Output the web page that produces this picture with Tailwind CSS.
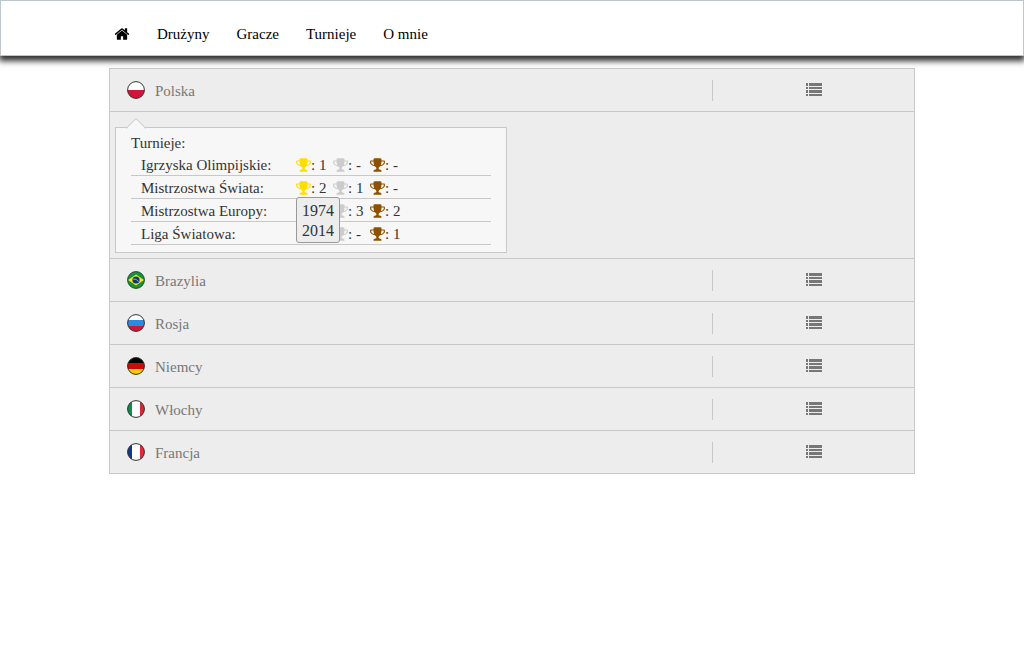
<!DOCTYPE html>
<html lang="pl">
<head>
<meta charset="utf-8">
<title>Drużyny</title>
<script src="https://cdn.jsdelivr.net/npm/@tailwindcss/browser@4"></script>
</head>
<body class="min-h-screen bg-white font-['Liberation_Serif',serif] text-[15px]">
<svg class="absolute size-0" aria-hidden="true">
  <symbol id="home" viewBox="0 0 1792 1792"><path d="M1472 992v480q0 26-19 45t-45 19h-384v-384h-256v384h-384q-26 0-45-19t-19-45v-480q0-1 .5-3t.5-3l575-474 575 474q1 2 1 6zm223-69l-62 74q-8 9-21 11h-3q-13 0-21-7l-692-577-692 577q-12 8-24 7-13-2-21-11l-62-74q-8-10-7-23.5t11-21.5l719-599q32-26 76-26t76 26l244 204v-195q0-14 9-23t23-9h192q14 0 23 9t9 23v408l219 182q10 8 11 21.5t-7 23.5z"/></symbol>
  <symbol id="cup" viewBox="64 0 1664 1792"><path d="M522 883q-74-162-74-371h-256v96q0 78 94.5 162t235.5 113zm1078-275v-96h-256q0 209-74 371 141-29 235.5-113t94.5-162zm128-128v128q0 71-41.5 143t-112 130-173 97.5-215.5 44.5q-42 54-95 95-38 34-52.5 72.5t-14.5 89.5q0 54 30.5 91t97.5 37q75 0 133.5 45.5t58.5 114.5v64q0 14-9 23t-23 9h-832q-14 0-23-9t-9-23v-64q0-69 58.5-114.5t133.5-45.5q67 0 97.5-37t30.5-91q0-51-14.5-89.5t-52.5-72.5q-53-41-95-95-113-5-215.5-44.5t-173-97.5-112-130-41.5-143v-128q0-40 28-68t68-28h288v-96q0-66 47-113t113-47h576q66 0 113 47t47 113v96h288q40 0 68 28t28 68z"/></symbol>
  <symbol id="list" viewBox="0 0 16 13"><path d="M0 0h2v3H0zM3 0h13v3H3zM0 4h2v2H0zM3 4h13v2H3zM0 7h2v3H0zM3 7h13v3H3zM0 11h2v2H0zM3 11h13v2H3z"/></symbol>
  <clipPath id="disc"><circle cx="9" cy="9" r="8.5"/></clipPath>
</svg>

<header class="border border-[#bfc6cb] bg-white shadow-[0_4px_6px_1px_#000000d0]">
  <nav class="mx-auto flex h-[54px] w-full max-w-[806px] items-end gap-[27px] pb-[11px] pl-[5px] leading-5 text-black">
    <a href="#" aria-label="Strona główna" class="mb-[2px]"><svg class="size-4 fill-black"><use href="#home"/></svg></a>
    <a href="#">Drużyny</a>
    <a href="#">Gracze</a>
    <a href="#">Turnieje</a>
    <a href="#">O mnie</a>
  </nav>
</header>

<main class="mx-auto mt-3 w-full max-w-[806px] divide-y divide-[#c8c8c8] border border-[#c8c8c8] bg-[#ededed] text-[#777777]">
  <section class="grid h-[43px] grid-cols-[3fr_1fr] items-center">
    <h2 class="flex h-[21px] items-center gap-[10px] border-r border-[#c8c8c8] pl-[17px]">
      <svg class="size-[18px]" viewBox="0 0 18 18"><g clip-path="url(#disc)"><path fill="#fff" d="M0 0h18v9H0z"/><path fill="#d3143a" d="M0 9h18v9H0z"/></g><circle cx="9" cy="9" r="8.4" fill="none" stroke="#333"/></svg>
      <span class="pt-[2px]">Polska</span></h2>
    <button aria-label="Szczegóły: Polska" class="mx-auto mb-[2px]"><svg class="h-[13px] w-4 fill-[#777777]"><use href="#list"/></svg></button>
  </section>

  <section class="pt-[15px] pr-[5px] pb-[5px] pl-[5px]">
    <div class="relative w-full max-w-[392px] border border-[#c8c8c8] bg-[#f7f7f7] px-[15px] pb-[7px] text-[#333333]">
      <svg class="absolute -top-[10px] left-[10px] h-[11px] w-5" viewBox="0 0 20 11"><path d="M0 11 10 1l10 10" fill="#f7f7f7"/><path d="M0 10.500 10 .7l10 9.800" fill="none" stroke="#c8c8c8"/></svg>
      <table class="w-full border-separate border-spacing-0 text-left leading-[19px] [&_td]:border-b [&_td]:border-[#c8c8c8] [&_th]:border-b [&_th]:border-[#c8c8c8]">
        <caption class="h-[25px] pt-[6px] text-left">Turnieje:</caption>
        <tbody>
          <tr class="h-[23px]">
            <th scope="row" class="w-[165px] p-0 pt-[3px] pl-[10px] font-normal">Igrzyska Olimpijskie:</th>
            <td class="w-[37px] p-0"><span class="flex items-center"><svg class="mt-[2px] h-4 w-[15px] shrink-0 fill-[#ffdd00]"><use href="#cup"/></svg><span class="whitespace-nowrap pt-[3px]">: 1</span></span></td>
            <td class="w-[37px] p-0"><span class="flex items-center"><svg class="mt-[2px] h-4 w-[15px] shrink-0 fill-[#cccccc]"><use href="#cup"/></svg><span class="whitespace-nowrap pt-[3px]">: -</span></span></td>
            <td class="p-0"><span class="flex items-center"><svg class="mt-[2px] h-4 w-[15px] shrink-0 fill-[#8c5200]"><use href="#cup"/></svg><span class="whitespace-nowrap pt-[3px]">: -</span></span></td>
          </tr>
          <tr class="h-[23px]">
            <th scope="row" class="p-0 pt-[3px] pl-[10px] font-normal">Mistrzostwa Świata:</th>
            <td class="relative p-0"><span class="flex items-center"><svg class="mt-[2px] h-4 w-[15px] shrink-0 fill-[#ffdd00]"><use href="#cup"/></svg><span class="whitespace-nowrap pt-[3px]">: 2</span></span>
              <div role="tooltip" class="absolute top-[21px] left-0 z-10 w-[44px] rounded-[3px] border border-[#999999] bg-[#ededed] pt-[3px] pb-[1px] text-center text-base leading-5">1974<br>2014</div></td>
            <td class="p-0"><span class="flex items-center"><svg class="mt-[2px] h-4 w-[15px] shrink-0 fill-[#cccccc]"><use href="#cup"/></svg><span class="whitespace-nowrap pt-[3px]">: 1</span></span></td>
            <td class="p-0"><span class="flex items-center"><svg class="mt-[2px] h-4 w-[15px] shrink-0 fill-[#8c5200]"><use href="#cup"/></svg><span class="whitespace-nowrap pt-[3px]">: -</span></span></td>
          </tr>
          <tr class="h-[23px]">
            <th scope="row" class="p-0 pt-[3px] pl-[10px] font-normal">Mistrzostwa Europy:</th>
            <td class="p-0"></td>
            <td class="p-0"><span class="flex items-center"><svg class="mt-[2px] h-4 w-[15px] shrink-0 fill-[#cccccc]"><use href="#cup"/></svg><span class="whitespace-nowrap pt-[3px]">: 3</span></span></td>
            <td class="p-0"><span class="flex items-center"><svg class="mt-[2px] h-4 w-[15px] shrink-0 fill-[#8c5200]"><use href="#cup"/></svg><span class="whitespace-nowrap pt-[3px]">: 2</span></span></td>
          </tr>
          <tr class="h-[23px]">
            <th scope="row" class="p-0 pt-[3px] pl-[10px] font-normal">Liga Światowa:</th>
            <td class="p-0"></td>
            <td class="p-0"><span class="flex items-center"><svg class="mt-[2px] h-4 w-[15px] shrink-0 fill-[#cccccc]"><use href="#cup"/></svg><span class="whitespace-nowrap pt-[3px]">: -</span></span></td>
            <td class="p-0"><span class="flex items-center"><svg class="mt-[2px] h-4 w-[15px] shrink-0 fill-[#8c5200]"><use href="#cup"/></svg><span class="whitespace-nowrap pt-[3px]">: 1</span></span></td>
          </tr>
        </tbody>
      </table>
    </div>
  </section>

  <section class="grid h-[43px] grid-cols-[3fr_1fr] items-center">
    <h2 class="flex h-[21px] items-center gap-[10px] border-r border-[#c8c8c8] pl-[17px]">
      <svg class="size-[18px]" viewBox="0 0 18 18"><circle cx="9" cy="9" r="8.500" fill="#16923a"/><path fill="#f4e327" d="M9 3.500 17 9l-8 5.500L1 9z"/><circle cx="9" cy="9" r="3.600" fill="#123a70"/><path d="M5.800 8q3.500-.5 6 2.600" fill="none" stroke="#9bc4dc" stroke-width=".8"/><circle cx="9" cy="9" r="8.400" fill="none" stroke="#254f2a"/></svg>
      <span class="pt-[2px]">Brazylia</span></h2>
    <button aria-label="Szczegóły: Brazylia" class="mx-auto mb-[2px]"><svg class="h-[13px] w-4 fill-[#777777]"><use href="#list"/></svg></button>
  </section>
  <section class="grid h-[43px] grid-cols-[3fr_1fr] items-center">
    <h2 class="flex h-[21px] items-center gap-[10px] border-r border-[#c8c8c8] pl-[17px]">
      <svg class="size-[18px]" viewBox="0 0 18 18"><g clip-path="url(#disc)"><path fill="#fff" d="M0 0h18v6H0z"/><path fill="#2a8be0" d="M0 6h18v6H0z"/><path fill="#d3143a" d="M0 12h18v6H0z"/></g><circle cx="9" cy="9" r="8.400" fill="none" stroke="#333"/></svg>
      <span class="pt-[2px]">Rosja</span></h2>
    <button aria-label="Szczegóły: Rosja" class="mx-auto mb-[2px]"><svg class="h-[13px] w-4 fill-[#777777]"><use href="#list"/></svg></button>
  </section>
  <section class="grid h-[43px] grid-cols-[3fr_1fr] items-center">
    <h2 class="flex h-[21px] items-center gap-[10px] border-r border-[#c8c8c8] pl-[17px]">
      <svg class="size-[18px]" viewBox="0 0 18 18"><g clip-path="url(#disc)"><path fill="#000" d="M0 0h18v6H0z"/><path fill="#d00808" d="M0 6h18v6H0z"/><path fill="#ffce00" d="M0 12h18v6H0z"/></g><circle cx="9" cy="9" r="8.400" fill="none" stroke="#332a20"/></svg>
      <span class="pt-[2px]">Niemcy</span></h2>
    <button aria-label="Szczegóły: Niemcy" class="mx-auto mb-[2px]"><svg class="h-[13px] w-4 fill-[#777777]"><use href="#list"/></svg></button>
  </section>
  <section class="grid h-[43px] grid-cols-[3fr_1fr] items-center">
    <h2 class="flex h-[21px] items-center gap-[10px] border-r border-[#c8c8c8] pl-[17px]">
      <svg class="size-[18px]" viewBox="0 0 18 18"><g clip-path="url(#disc)"><path fill="#07914a" d="M0 0h5v18H0z"/><path fill="#fff" d="M5 0h8v18H5z"/><path fill="#ce2b37" d="M13 0h5v18h-5z"/></g><circle cx="9" cy="9" r="8.400" fill="none" stroke="#333"/></svg>
      <span class="pt-[2px]">Włochy</span></h2>
    <button aria-label="Szczegóły: Włochy" class="mx-auto mb-[2px]"><svg class="h-[13px] w-4 fill-[#777777]"><use href="#list"/></svg></button>
  </section>
  <section class="grid h-[42px] grid-cols-[3fr_1fr] items-center">
    <h2 class="flex h-[21px] items-center gap-[10px] border-r border-[#c8c8c8] pl-[17px]">
      <svg class="size-[18px]" viewBox="0 0 18 18"><g clip-path="url(#disc)"><path fill="#12359b" d="M0 0h5v18H0z"/><path fill="#fff" d="M5 0h8v18H5z"/><path fill="#e0293b" d="M13 0h5v18h-5z"/></g><circle cx="9" cy="9" r="8.400" fill="none" stroke="#333"/></svg>
      <span class="pt-[2px]">Francja</span></h2>
    <button aria-label="Szczegóły: Francja" class="mx-auto mb-[2px]"><svg class="h-[13px] w-4 fill-[#777777]"><use href="#list"/></svg></button>
  </section>
</main>
</body>
</html>
